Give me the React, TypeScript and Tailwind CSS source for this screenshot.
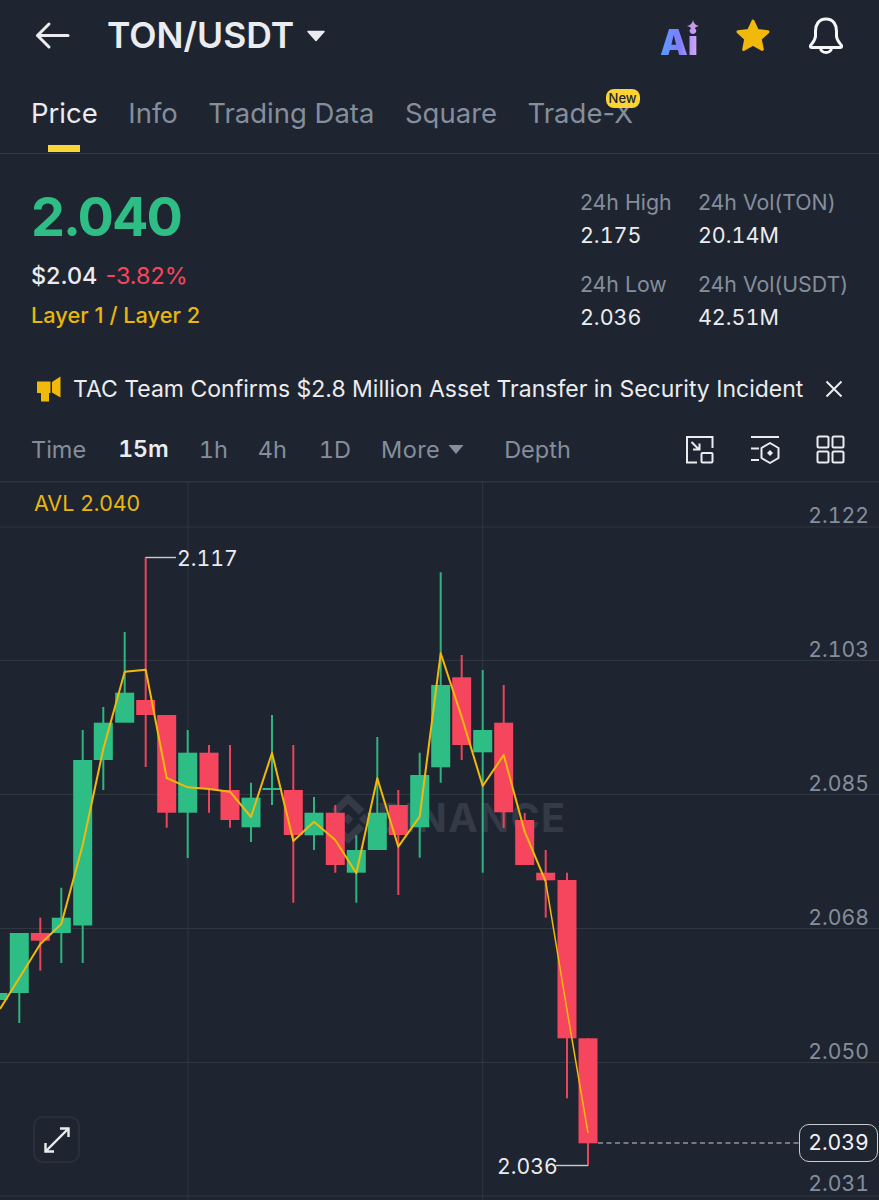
import React from "react";

const G = "#2ebd85";
const R = "#f6465d";
// x, bodyTop, bodyBottom, wickTop, wickBottom, colour
const candles: [number, number, number, number, number, string][] = [
  [-2, 993, 1000, 980, 1020, G],
  [19.3, 933, 993, 933, 1023, G],
  [40.3, 933, 940.7, 917.7, 970.7, R],
  [61.3, 917.7, 933, 887.7, 963, G],
  [82.7, 760, 925.5, 730, 963, G],
  [103.3, 722.7, 760, 707, 790, G],
  [124.7, 692.7, 722.7, 632, 722, G],
  [145.7, 700, 715, 557, 767, R],
  [166.7, 715, 812.7, 715, 827.7, R],
  [187.7, 752.7, 812.7, 730, 858, G],
  [209, 752.7, 789, 745, 812.7, R],
  [230, 790, 820, 745, 827.7, R],
  [251, 797.7, 827.3, 782.7, 842, G],
  [272, 788, 790, 715, 805, G],
  [293.3, 790, 835, 745, 902.7, R],
  [314, 812.7, 835.3, 797, 850, G],
  [335.3, 812.7, 865, 805, 872.7, R],
  [356.3, 850, 872.7, 835.3, 902.7, G],
  [377.3, 812.7, 850, 737, 850, G],
  [398.3, 805, 835, 790, 895, R],
  [419.7, 775, 827.3, 752.7, 857.7, G],
  [440.7, 685, 767.3, 572.3, 782.7, G],
  [461.7, 677.3, 745, 655, 760, R],
  [482.7, 730, 752.3, 670, 872.7, G],
  [503.7, 722.7, 812.3, 685, 828, R],
  [524.7, 820, 865, 813, 865, R],
  [545.7, 872.7, 880.3, 850, 917.7, R],
  [567, 880, 1038.3, 872.7, 1098.3, R],
  [588, 1038.3, 1143.3, 1038.3, 1165.7, R],
];

const avl =
  "0,1009 19.3,978 40.3,944 61.3,924 82.7,845 103.3,749 124.7,671.7 145.7,669.7 166.7,778 187.7,787.3 209,789 230,791.7 251,817 272,753 293.3,841 314,821.7 335.3,840 356.3,873.3 377.3,778.3 398.3,846.7 419.7,816.7 440.7,653.3 461.7,717 482.7,786 503.7,755 524.7,831.7 545.7,881.7";

const gridY = [482, 527, 660.5, 794.5, 928.5, 1062.5, 1196];

function Chart() {
  return (
    <div className="relative h-[718px] w-full overflow-hidden">
      {/* watermark */}
      <div className="absolute left-[323px] top-[312px] flex items-center">
        <svg width="50" height="50" viewBox="0 0 46 46" className="mr-[4px]">
          <path d="M13 15 L23 5 L33 15 L38 10 L23 -4 L8 10Z" fill="#343a46" transform="translate(0 4)" />
          <path d="M23 18 L28 23 L23 28 L18 23Z" fill="#343a46" />
          <path d="M13 31 L23 41 L33 31 L38 36 L23 50 L8 36Z" fill="#343a46" transform="translate(0 -4)" />
          <path d="M8 18 L13 23 L8 28 L3 23Z" fill="#343a46" />
          <path d="M38 18 L43 23 L38 28 L33 23Z" fill="#343a46" />
        </svg>
        <span className="text-[39.5px] font-bold leading-none tracking-[1.3px] text-[#343a46]">BINANCE</span>
      </div>

      <svg className="absolute inset-0" width="879" height="718" viewBox="0 482 879 718">
        {gridY.map((y) => (
          <line key={y} x1="0" x2="879" y1={y} y2={y} stroke="#313741" strokeWidth="1" />
        ))}
        {[188, 482.7].map((x) => (
          <line key={x} x1={x} x2={x} y1="482" y2="1200" stroke="#313741" strokeWidth="1" />
        ))}
        <line x1="598" x2="799" y1="1143" y2="1143" stroke="#c8ccd2" strokeWidth="1.2" strokeDasharray="5 3.5" />
        {candles.map(([x, t, b, wt, wb, c]) => (
          <g key={x}>
            <line x1={x} x2={x} y1={wt} y2={wb} stroke={c} strokeWidth="2" opacity="0.95" />
            <rect x={x - 9.5} y={t} width="19" height={b - t} fill={c} />
          </g>
        ))}
        <polyline points="145.7,557.5 176,557.5" fill="none" stroke="#c7ccd2" strokeWidth="1.4" />
        <polyline points="556,1165.5 588,1165.5" fill="none" stroke="#c7ccd2" strokeWidth="1.4" />
        <polyline points={avl} fill="none" stroke="#f0b90b" strokeWidth="2" strokeLinejoin="round" />
        <polyline points="545.7,881.7 567,1010 588,1133" fill="none" stroke="#f0b90b" strokeWidth="1.5" />
      </svg>

      <span className="absolute left-[34px] top-[7px] text-[21.5px] leading-[28px] text-[#e9b60f]">AVL 2.040</span>
      <span className="absolute left-[177px] top-[62px] text-[21.2px] leading-[28px] tabular-nums text-[#eaecef]">2.117</span>
      <span className="absolute left-[497px] top-[670px] text-[21.2px] leading-[28px] tabular-nums text-[#eaecef]">2.036</span>

      <span className="absolute right-[10px] top-[19px] text-[21.2px] leading-[28px] tabular-nums text-[#848e9c]">2.122</span>
      <span className="absolute right-[10px] top-[153px] text-[21.2px] leading-[28px] tabular-nums text-[#848e9c]">2.103</span>
      <span className="absolute right-[10px] top-[287px] text-[21.2px] leading-[28px] tabular-nums text-[#848e9c]">2.085</span>
      <span className="absolute right-[10px] top-[421px] text-[21.2px] leading-[28px] tabular-nums text-[#848e9c]">2.068</span>
      <span className="absolute right-[10px] top-[555px] text-[21.2px] leading-[28px] tabular-nums text-[#848e9c]">2.050</span>
      <span className="absolute right-[10px] top-[687px] text-[21.2px] leading-[28px] tabular-nums text-[#848e9c]">2.031</span>

      <span className="absolute left-[799px] top-[642px] flex h-[38px] w-[79px] items-center justify-center rounded-[10px] border border-[#c8ccd2] bg-[#1f2530] text-[21.2px] tabular-nums text-[#f2f3f5]">
        2.039
      </span>

      <button className="absolute left-[33px] top-[634px] flex h-[47px] w-[47px] items-center justify-center rounded-[10px] border-2 border-[#2a303b]">
        <svg width="30" height="30" viewBox="0 0 30 30" fill="none" stroke="#eaecef" strokeWidth="2.4">
          <path d="M3.5 26.5 L26.5 3.5" />
          <path d="M18 3.5 H26.5 V12" />
          <path d="M3.5 18 V26.5 H12" />
        </svg>
      </button>
    </div>
  );
}

export default function App() {
  return (
    <div className="h-[1200px] w-[879px] overflow-hidden bg-[#1f2530] font-['Inter',sans-serif] text-[#eaecef]">
      {/* top bar */}
      <div className="flex h-[72px] items-center pl-[35px] pr-[35px]">
        <svg width="36" height="30" viewBox="0 0 36 30" fill="none" stroke="#eaecef" strokeWidth="3" strokeLinecap="round" strokeLinejoin="round">
          <path d="M3 14.5 H33" />
          <path d="M14 3 L2.5 14.5 L14 26" />
        </svg>
        <span className="ml-[36px] text-[35.5px] font-semibold leading-none">TON/USDT</span>
        <svg width="20" height="12" viewBox="0 0 20 12" className="ml-[12px]">
          <path d="M2 1.5 H18 L10 10.5 Z" fill="#eaecef" stroke="#eaecef" strokeWidth="1.5" strokeLinejoin="round" />
        </svg>
        <div className="ml-auto flex items-center">
          <span className="relative mr-[37px] mt-[14px] w-[38px]">
            <span className="bg-gradient-to-r from-[#4f9dff] via-[#7f7cff] to-[#d9a8f0] bg-clip-text text-[35px] font-black leading-none text-transparent">
              Ai
            </span>
            <svg width="12" height="12" viewBox="0 0 12 12" className="absolute right-[-1px] top-[-5px]">
              <path d="M6 0 Q6.8 5.2 12 6 Q6.8 6.8 6 12 Q5.2 6.8 0 6 Q5.2 5.2 6 0Z" fill="#c79ae8" />
            </svg>
          </span>
          <svg width="36" height="36" viewBox="0 0 36 36" className="mr-[37px]">
            <path
              d="M18 3 L22.4 12.6 L33 13.8 L25.2 20.9 L27.3 31.4 L18 26.2 L8.7 31.4 L10.8 20.9 L3 13.8 L13.6 12.6 Z"
              fill="#f0b90b"
              stroke="#f0b90b"
              strokeWidth="3"
              strokeLinejoin="round"
            />
          </svg>
          <svg width="36" height="38" viewBox="0 0 36 38" fill="none" stroke="#f5f6f7" strokeWidth="3" strokeLinejoin="round" strokeLinecap="round">
            <path d="M18 2 C10.5 2 7.5 8 7.5 14 V19 C7.5 23 5 25 2.5 28.5 Q2 30.5 4 30.5 H32 Q34 30.5 33.5 28.5 C31 25 28.5 23 28.5 19 V14 C28.5 8 25.5 2 18 2 Z" />
            <path d="M12.5 31 C13 37 23 37 23.5 31" />
          </svg>
        </div>
      </div>

      {/* tabs */}
      <div className="flex h-[82px] items-center gap-[30.5px] border-b border-[#343a44] pl-[31px] pr-[32px] pt-[3px] text-[27.5px] leading-none text-[#848e9c]">
        <span className="relative text-[#eaecef]">
          Price
          <span className="absolute left-[17px] top-[45px] h-[7px] w-[32px] bg-[#fcd535]" />
        </span>
        <span>Info</span>
        <span>Trading Data</span>
        <span>Square</span>
        <span className="relative">
          Trade-X
          <span className="absolute left-[78px] top-[-11px] flex h-[19px] w-[34px] items-center justify-center rounded-[8px] bg-[#fcd535] text-[13px] font-medium text-[#1e2329]">
            New
          </span>
        </span>
      </div>

      {/* stats */}
      <div className="flex h-[206px] pl-[31px] pr-[32px]">
        <div className="flex flex-col">
          <span className="mt-[29px] text-[54px] font-bold leading-[68px] tracking-[-2px] text-[#2ebd85]">2.040</span>
          <div className="mt-[9px] flex items-center gap-[8px] text-[23.4px] leading-[32px]">
            <span className="font-medium text-[#eaecef]">$2.04</span>
            <span className="text-[#f6465d]">-3.82%</span>
          </div>
          <span className="mt-[9px] text-[21.8px] font-medium leading-[28px] text-[#e9b60f]">Layer 1 / Layer 2</span>
        </div>
        <div className="ml-auto mr-[-1px] grid grid-cols-[118px_auto] content-start gap-y-[19px] pt-[33px] text-[21.3px] leading-[30px]">
          <div className="flex flex-col gap-[3px]">
            <span className="text-[#848e9c]">24h High</span>
            <span className="text-[21.5px] tabular-nums">2.175</span>
          </div>
          <div className="flex flex-col gap-[3px]">
            <span className="text-[#848e9c]">24h Vol(TON)</span>
            <span className="text-[21.5px] tabular-nums">20.14M</span>
          </div>
          <div className="flex flex-col gap-[3px]">
            <span className="text-[#848e9c]">24h Low</span>
            <span className="text-[21.5px] tabular-nums">2.036</span>
          </div>
          <div className="flex flex-col gap-[3px]">
            <span className="text-[#848e9c]">24h Vol(USDT)</span>
            <span className="text-[21.5px] tabular-nums">42.51M</span>
          </div>
        </div>
      </div>

      {/* ticker */}
      <div className="flex h-[58px] items-center pl-[37px] pr-[36px]">
        <svg width="24" height="26" viewBox="0 0 24 26">
          <path d="M0 5.5 H13.5 V17 H0 Z M4 17 H12 V25.5 H4 Z" fill="#f0b90b" />
          <path d="M15 6 L23.5 0.5 V21.5 L15 16.5 Z" fill="#f0b90b" />
        </svg>
        <span className="ml-[12px] text-[23px] leading-none text-[#eaecef]">
          TAC Team Confirms $2.8 Million Asset Transfer in Security Incident
        </span>
        <svg width="18" height="18" viewBox="0 0 18 18" fill="none" stroke="#eaecef" strokeWidth="2" className="ml-auto">
          <path d="M1.5 1.5 L16.5 16.5 M16.5 1.5 L1.5 16.5" />
        </svg>
      </div>

      {/* timeframes */}
      <div className="flex h-[64px] items-center border-b border-[#2f3540] pl-[31px] pr-[34px] text-[23.5px] leading-none text-[#848e9c]">
        <span>Time</span>
        <span className="ml-[32px] text-[23px] font-semibold tabular-nums text-[#eaecef]">15m</span>
        <span className="ml-[30px] tabular-nums">1h</span>
        <span className="ml-[30px]">4h</span>
        <span className="ml-[32px] tabular-nums">1D</span>
        <span className="ml-[30px] tracking-[0.4px]">More</span>
        <svg width="18" height="11" viewBox="0 0 18 11" className="ml-[7px]">
          <path d="M1.5 1 H16.5 L9 10 Z" fill="#848e9c" />
        </svg>
        <span className="ml-[39px]">Depth</span>
        <div className="ml-auto flex items-center gap-[36px]">
          <svg width="29" height="29" viewBox="0 0 29 29" fill="none" stroke="#eaecef" strokeWidth="2">
            <path d="M12 27.5 H2 V2 H27.5 V13" />
            <rect x="16.5" y="18" width="11" height="9.5" rx="1" />
            <path d="M6.5 7 L14 14.5 M14.5 8.5 V14.5 H8" />
          </svg>
          <svg width="30" height="29" viewBox="0 0 30 29" fill="none" stroke="#eaecef" strokeWidth="2">
            <path d="M1 2 H29 M1 13.5 H9 M1 25 H9" />
            <path d="M20 8 L28.5 13 V23 L20 28 L11.5 23 V13 Z" strokeLinejoin="round" />
            <path d="M20 15 L23 18 L20 21 L17 18 Z" fill="#eaecef" stroke="none" />
          </svg>
          <svg width="29" height="29" viewBox="0 0 29 29" fill="none" stroke="#eaecef" strokeWidth="2">
            <rect x="1.5" y="1.5" width="11" height="11" rx="1.5" />
            <rect x="16.5" y="1.5" width="11" height="11" rx="1.5" />
            <rect x="1.5" y="16.5" width="11" height="11" rx="1.5" />
            <rect x="16.5" y="16.5" width="11" height="11" rx="1.5" />
          </svg>
        </div>
      </div>

      <Chart />
    </div>
  );
}
